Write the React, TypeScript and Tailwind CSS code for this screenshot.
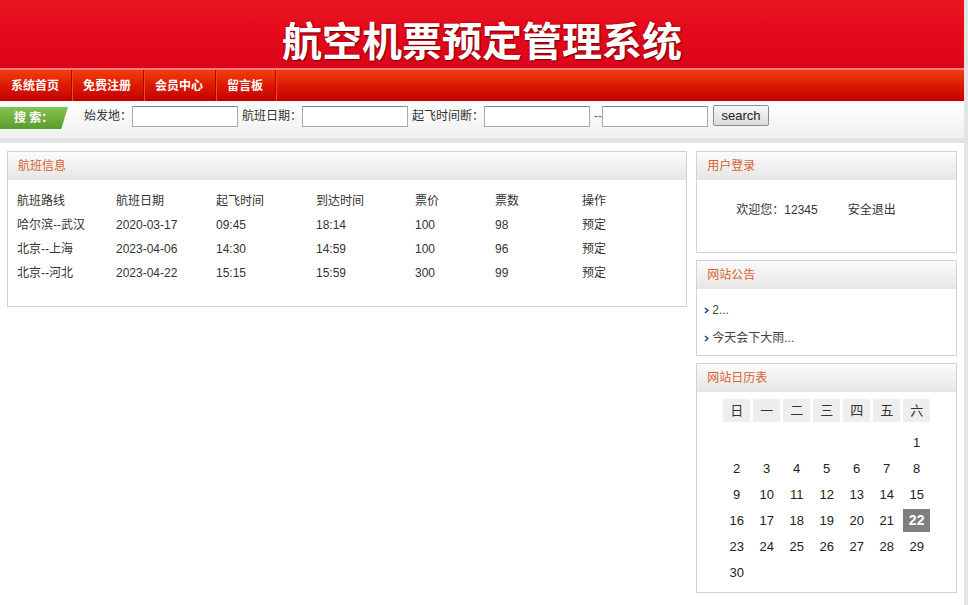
const FONT = "font-['Liberation_Sans','Noto_Sans_CJK_SC',sans-serif]";

const navItems = ["系统首页", "免费注册", "会员中心", "留言板"];

const flights = [
  { route: "哈尔滨--武汉", date: "2020-03-17", dep: "09:45", arr: "18:14", price: "100", count: "98" },
  { route: "北京--上海", date: "2023-04-06", dep: "14:30", arr: "14:59", price: "100", count: "96" },
  { route: "北京--河北", date: "2023-04-22", dep: "15:15", arr: "15:59", price: "300", count: "99" },
];

const notices = ["2...", "今天会下大雨..."];

const weekDays = ["日", "一", "二", "三", "四", "五", "六"];

function Panel({ title, children }: { title: string; children: React.ReactNode }) {
  return (
    <div className="border border-[#d2d2d2] bg-white">
      <div className="h-[28px] flex items-center px-[10px] bg-gradient-to-b from-[#fbfbfb] to-[#e6e6e6] text-[12px] text-[#d8622e]">
        {title}
      </div>
      {children}
    </div>
  );
}

function Arrow() {
  return (
    <svg width="5" height="7" viewBox="0 0 5 7" className="shrink-0">
      <path d="M1 1 L3.8 3.5 L1 6" fill="none" stroke="#1d4f91" strokeWidth="1.6" />
    </svg>
  );
}

function Calendar() {
  const cells: (number | null)[] = [null, null, null, null, null, null];
  for (let d = 1; d <= 30; d++) cells.push(d);
  while (cells.length % 7 !== 0) cells.push(null);
  return (
    <div className="w-[207px] mx-auto pt-[7px] pb-[8px]">
      <div className="grid grid-cols-7 gap-x-[3px]">
        {weekDays.map((w) => (
          <div key={w} className="h-[23px] bg-[#eeeeee] flex items-center justify-center text-[13px] text-[#333]">
            {w}
          </div>
        ))}
      </div>
      <div className="grid grid-cols-7 gap-x-[3px] gap-y-[3px] mt-[9px]">
        {cells.map((d, i) =>
          d === 22 ? (
            <div key={i} className="h-[23px] bg-[#7f7f7f] flex items-center justify-center text-[14px] font-bold text-white">
              {d}
            </div>
          ) : (
            <div key={i} className="h-[23px] flex items-center justify-center text-[13px] text-[#222]">
              {d ?? ""}
            </div>
          )
        )}
      </div>
    </div>
  );
}

export default function App() {
  return (
    <div className={`${FONT} min-h-screen bg-[#e4e4e4]`}>
      <div className="w-[964px] bg-white min-h-[605px]">
        {/* Banner */}
        <div className="h-[68px] bg-gradient-to-b from-[#ea1522] via-[#e40a1b] to-[#dc0519] flex items-start justify-center">
          <h1 className="mt-[21px] text-[40px] leading-[42px] font-bold text-white [text-shadow:1px_1px_1px_#7a0008,0_0_3px_#a0000c]">
            航空机票预定管理系统
          </h1>
        </div>
        <div className="h-[2px] bg-[#f27a7a]" />

        {/* Nav */}
        <div className="h-[31px] flex bg-gradient-to-b from-[#f23d0c] via-[#dc1804] to-[#c40000]">
          {navItems.map((item) => (
            <div
              key={item}
              className="pl-[11px] pr-[12px] flex items-center text-[12px] font-bold text-white border-r border-[#b80000] shadow-[1px_0_0_#ee4a2a]"
            >
              {item}
            </div>
          ))}
        </div>

        {/* Search bar */}
        <div className="h-[37px] flex items-start pt-[5px] bg-gradient-to-b from-[#ffffff] to-[#f0f0f0] text-[12px] text-[#333]">
          <div className="w-[68px] h-[22px] mt-[1px] flex items-center pl-[14px] text-white font-bold text-[12px] bg-gradient-to-b from-[#84c452] to-[#5a9c2c] [clip-path:polygon(0_0,100%_0,90%_100%,0_100%)]">
            搜&nbsp;索：
          </div>
          <span className="ml-[16px] leading-[21px]">始发地：</span>
          <input className="w-[106px] h-[21px] border border-[#a9a9a9] border-t-[#8a8a8a] bg-white" />
          <span className="ml-[4px] leading-[21px]">航班日期：</span>
          <input className="w-[106px] h-[21px] border border-[#a9a9a9] border-t-[#8a8a8a] bg-white" />
          <span className="ml-[4px] leading-[21px]">起飞时间断：</span>
          <input className="w-[106px] h-[21px] border border-[#a9a9a9] border-t-[#8a8a8a] bg-white" />
          <span className="ml-[4px] leading-[21px] text-[#666]">--</span>
          <input className="w-[106px] h-[21px] border border-[#a9a9a9] border-t-[#8a8a8a] bg-white" />
          <button className="ml-[5px] w-[56px] h-[21px] -mt-[1px] border border-[#8c8c8c] rounded-[2px] bg-gradient-to-b from-[#f8f8f8] to-[#dcdcdc] text-[13px] text-[#222] leading-none">
            search
          </button>
        </div>
        <div className="h-[5px] bg-[#e3e3e3]" />

        {/* Content */}
        <div className="flex gap-[9px] px-[7px] pt-[8px]">
          <div className="w-[681px] self-start">
            <Panel title="航班信息">
              <div className="pt-[9px] pb-[21px] pl-[9px] text-[12px] text-[#333]">
                <div className="grid grid-cols-[99px_100px_100px_99px_80px_87px_1fr] h-[24px] items-center">
                  <span>航班路线</span>
                  <span>航班日期</span>
                  <span>起飞时间</span>
                  <span>到达时间</span>
                  <span>票价</span>
                  <span>票数</span>
                  <span>操作</span>
                </div>
                {flights.map((f) => (
                  <div
                    key={f.route + f.date}
                    className="grid grid-cols-[99px_100px_100px_99px_80px_87px_1fr] h-[24px] items-center"
                  >
                    <span>{f.route}</span>
                    <span>{f.date}</span>
                    <span>{f.dep}</span>
                    <span>{f.arr}</span>
                    <span>{f.price}</span>
                    <span>{f.count}</span>
                    <span>预定</span>
                  </div>
                ))}
              </div>
            </Panel>
          </div>

          <div className="w-[261px] flex flex-col gap-[7px]">
            <Panel title="用户登录">
              <div className="h-[72px] pt-[21px] pl-[39px] text-[12px] text-[#333] flex items-start">
                <span>欢迎您：12345</span>
                <span className="ml-[30px]">安全退出</span>
              </div>
            </Panel>

            <Panel title="网站公告">
              <div className="pt-[7px] pb-[3px] pl-[7px] text-[12px] text-[#444]">
                {notices.map((n) => (
                  <div key={n} className="h-[28px] flex items-center gap-[3px]">
                    <Arrow />
                    <span>{n}</span>
                  </div>
                ))}
              </div>
            </Panel>

            <Panel title="网站日历表">
              <Calendar />
            </Panel>
          </div>
        </div>
      </div>
    </div>
  );
}
